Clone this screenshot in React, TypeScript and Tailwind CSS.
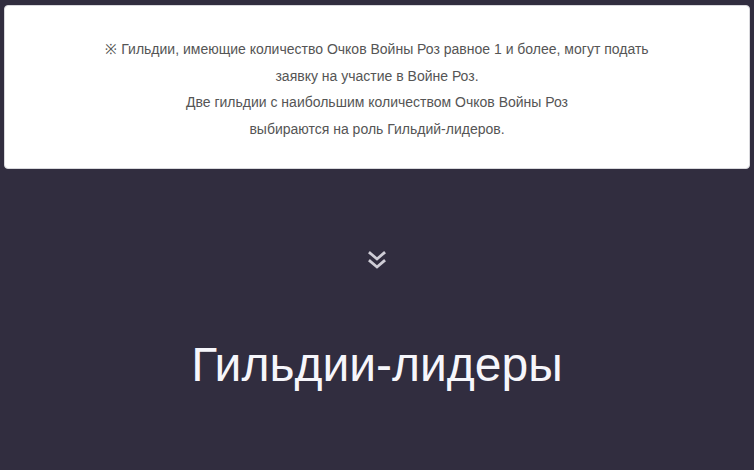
export default function App() {
  return (
    <div className="min-h-screen w-full bg-[#312d3f] pt-[5px] px-[4px] pb-10 font-['Liberation_Sans',Arial,sans-serif]">
      <div className="rounded-[4px] border border-[#d8d8dc] bg-white pt-[30px] pb-[26px] text-center text-[14px] leading-[26.5px] text-[#555555]">
        <p>※ Гильдии, имеющие количество Очков Войны Роз равное 1 и более, могут подать</p>
        <p>заявку на участие в Войне Роз.</p>
        <p>Две гильдии с наибольшим количеством Очков Войны Роз</p>
        <p>выбираются на роль Гильдий-лидеров.</p>
      </div>

      <div className="mt-[80px] flex justify-center">
        <svg width="24" height="24" viewBox="0 0 24 24" fill="none" stroke="#cfcdd6" strokeWidth="2.8" strokeLinecap="square">
          <path d="M5 4l7 6 7-6" />
          <path d="M5 12l7 6 7-6" />
        </svg>
      </div>

      <h1 className="mt-[68px] text-center text-[48px] font-normal leading-none text-[#f6f6fb]">Гильдии-лидеры</h1>
    </div>
  );
}
